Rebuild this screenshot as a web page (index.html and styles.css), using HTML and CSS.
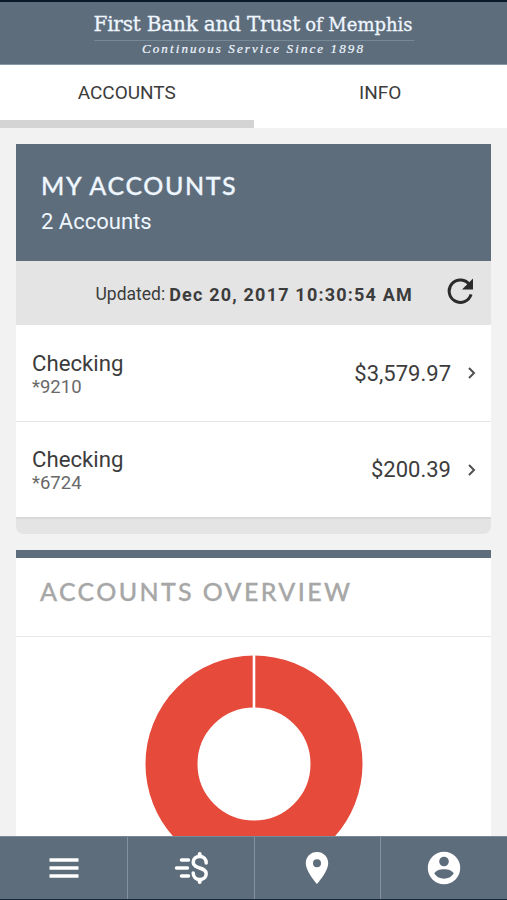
FILE: index.html
```html
<!DOCTYPE html>
<html lang="en">
<head>
    <meta charset="UTF-8">
    <meta name="viewport" content="width=device-width, initial-scale=1.0">
    <title>My Accounts</title>
    <link rel="stylesheet" href="styles.css">
</head>
<body>
    <header class="header">
        <div class="logo"><span class="logo-main">First Bank and Trust</span> <span class="logo-small">of Memphis</span></div>
        <div class="tagline">Continuous Service Since 1898</div>
    </header>

    <nav class="tabs">
        <a class="tab active">ACCOUNTS</a>
        <a class="tab">INFO</a>
    </nav>

    <main class="content">
        <section class="card accounts">
            <div class="card-header">
                <h1>MY ACCOUNTS</h1>
                <p>2 Accounts</p>
            </div>
            <div class="updated">
                <span class="updated-label">Updated:</span>
                <strong>Dec 20, 2017 10:30:54 AM</strong>
                <svg class="refresh" viewBox="0 0 26 26">
                    <path d="M22.6 6.8A11.2 11.2 0 1 0 24.1 16.4" fill="none" stroke="#2b2b2b" stroke-width="3"/>
                    <path d="M26 .5v11H15z" fill="#2b2b2b"/>
                </svg>
            </div>
            <div class="account">
                <div class="account-info">
                    <div class="name">Checking</div>
                    <div class="number">*9210</div>
                </div>
                <div class="amount">$3,579.97</div>
                <svg class="chevron" viewBox="0 0 8 12"><path d="M1 1l5 5-5 5"/></svg>
            </div>
            <div class="account">
                <div class="account-info">
                    <div class="name">Checking</div>
                    <div class="number">*6724</div>
                </div>
                <div class="amount">$200.39</div>
                <svg class="chevron" viewBox="0 0 8 12"><path d="M1 1l5 5-5 5"/></svg>
            </div>
            <div class="card-footer"></div>
        </section>

        <section class="card overview">
            <h2>ACCOUNTS OVERVIEW</h2>
            <svg class="chart" viewBox="0 0 218 218">
                <circle cx="109" cy="109" r="82.5" fill="none" stroke="#e64a3b" stroke-width="52"/>
                <path d="M109 0v54" stroke="#fff" stroke-width="2.6"/>
            </svg>
        </section>
    </main>

    <footer class="bottom-bar">
        <a class="bar-item">
            <svg width="30" height="22" viewBox="0 0 30 22">
                <path d="M.5 3h29M.5 11h29M.5 19h29" stroke="#fff" stroke-width="3.4"/>
            </svg>
        </a>
        <a class="bar-item">
            <svg width="36" height="34" viewBox="0 0 36 34">
                <g fill="none" stroke="#fff" stroke-linecap="round">
                    <path d="M8.5 9h7M3.500 17h11M8.500 25h7" stroke-width="3.500"/>
                    <path d="M33.200 12c0-4-2.600-6.500-6.500-6.500S20.200 8 20.200 11.300c0 7.200 13 4.200 13 11.400 0 3.400-2.800 5.800-6.500 5.800S20.200 26 20.200 22" stroke-width="3.500"/>
                    <path d="M26.700 5V3M26.700 29v2" stroke-width="4"/>
                </g>
            </svg>
        </a>
        <a class="bar-item">
            <svg width="24" height="34" viewBox="0 0 24 34">
                <path d="M12 1C5.500 1 .8 5.900 .8 12.300.8 20.700 12 33 12 33s11.200-12.300 11.200-20.700C23.200 5.900 18.500 1 12 1zm0 15.300a4 4 0 1 1 0-8 4 4 0 0 1 0 8z" fill="#fff"/>
            </svg>
        </a>
        <a class="bar-item">
            <svg width="34" height="34" viewBox="0 0 34 34">
                <circle cx="17" cy="17" r="16.200" fill="#fff"/>
                <circle cx="17" cy="10.500" r="4.800" fill="#5e6d7b"/>
                <path d="M7.300 22.500C9.500 16.800 24.500 16.800 26.700 22.500 22.500 29.400 11.500 29.400 7.300 22.500z" fill="#5e6d7b"/>
            </svg>
        </a>
    </footer>
</body>
</html>
```
FILE: styles.css
```css
* {
    box-sizing: border-box;
}
body {
    margin: 0;
    height: 100vh;
    display: flex;
    flex-direction: column;
    overflow: hidden;
    background-color: #f2f2f2;
    color: #3c3c3c;
    font-family: Roboto, sans-serif;
}
h1, h2, p {
    margin: 0;
}
.header {
    flex: none;
    height: 65px;
    padding-top: 8px;
    display: flex;
    flex-direction: column;
    align-items: center;
    background-color: #5e6d7b;
    border-top: 2px solid #0b1a2b;
    border-bottom: 1px solid #8797a5;
    color: #eef6ff;
    font-family: "Liberation Serif", serif;
}
.logo {
    width: 320px;
    height: 31px;
    line-height: 28px;
    white-space: nowrap;
    font-family: "DejaVu Serif", serif;
    border-bottom: 1px solid #778896;
    -webkit-text-stroke: 0.3px #eef6ff;
}
.logo-main {
    font-size: 20px;
    letter-spacing: -0.2px;
}
.logo-small {
    font-size: 18px;
}
.tagline {
    margin-top: 0;
    font-size: 13px;
    line-height: 16px;
    font-style: italic;
    letter-spacing: 2.1px;
    -webkit-text-stroke: 0.2px #eef6ff;
}
.tabs {
    flex: none;
    display: flex;
    height: 63px;
    background-color: #fff;
}
.tab {
    flex: 1;
    padding-top: 16px;
    text-align: center;
    font-size: 19px;
    line-height: 24px;
    border-bottom: 8px solid #fff;
}
.tab.active {
    border-bottom-color: #d4d4d4;
}
.content {
    flex: 1;
    min-height: 0;
    padding: 16px 16px 0;
    overflow: hidden;
}
.card {
    background-color: #fff;
}
.card-header {
    height: 117px;
    padding: 25px 25px;
    background-color: #5e6d7b;
    color: #eef6ff;
}
.card-header h1, .overview h2 {
    font-family: Lato, sans-serif;
    font-size: 25px;
    line-height: 32px;
    font-weight: 500;
    -webkit-text-stroke: 0.3px;
}
.card-header h1 {
    letter-spacing: 1.6px;
}
.card-header p {
    margin-top: 7px;
    font-size: 22px;
    line-height: 28px;
}
.updated {
    display: flex;
    align-items: center;
    justify-content: flex-end;
    height: 64px;
    padding: 2px 18px 0 0;
    background-color: #e4e4e4;
    font-size: 18px;
}
.updated-label {
    font-size: 17.5px;
}
.updated strong {
    margin-left: 4px;
    letter-spacing: 1.2px;
}
.refresh {
    width: 26px;
    height: 26px;
    margin: -6px 0 0 34px;
}
.account {
    display: flex;
    align-items: center;
    height: 96px;
    padding: 0 15px 0 16px;
}
.account + .account {
    border-top: 1px solid #e4e4e4;
}
.account-info {
    flex: 1;
    padding-top: 2px;
}
.name {
    font-size: 22.2px;
    line-height: 26px;
}
.number {
    color: #696969;
    font-size: 18.5px;
    line-height: 23px;
}
.amount {
    font-size: 22px;
}
.chevron {
    width: 8px;
    height: 12px;
    margin-left: 17px;
    fill: none;
    stroke: #505050;
    stroke-width: 2;
}
.card-footer {
    height: 17px;
    background-color: #e4e4e4;
    border-top: 2px solid #d9d9d9;
    border-radius: 0 0 7px 7px;
}
.accounts {
    border-radius: 0 0 7px 7px;
}
.overview {
    margin-top: 16px;
    border-top: 8px solid #5e6d7b;
}
.overview h2 {
    height: 79px;
    padding: 17px 24px 0;
    border-bottom: 1px solid #e8e8e8;
    color: #a7a7a7;
    letter-spacing: 2.35px;
}
.chart {
    display: block;
    width: 218px;
    height: 218px;
    margin: 18px auto 30px;
}
.bottom-bar {
    flex: none;
    display: flex;
    height: 64px;
    padding-left: 1px;
    background-color: #5e6d7b;
    border-top: 1px solid #778896;
    border-bottom: 1px solid #17283a;
}
.bar-item {
    flex: 1;
    display: flex;
    align-items: center;
    justify-content: center;
    padding-bottom: 1px;
}
.bar-item + .bar-item {
    border-left: 1px solid #8592a0;
}
```
